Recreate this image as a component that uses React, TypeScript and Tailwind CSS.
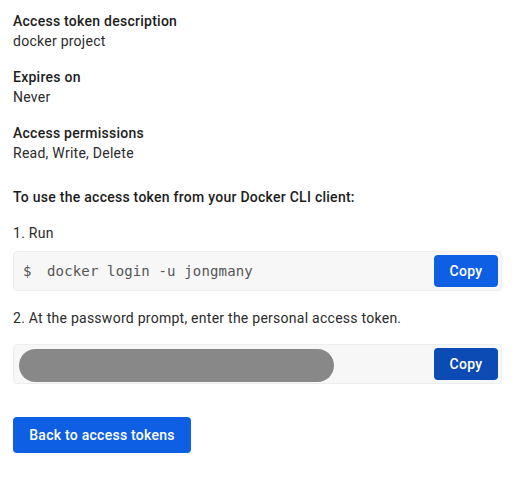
import React from "react";

export default function App() {
  return (
    <div
      className="w-[520px] h-[477px] bg-white pl-[13px] pr-[18px] pt-[11px] text-[14px] leading-[20px] tracking-[0.26px] text-[#1d1d1d]"
      style={{ fontFamily: "Roboto, 'Noto Sans', sans-serif" }}
    >
      <div className="flex flex-col gap-4">
        <div>
          <div className="font-medium">Access token description</div>
          <div className="text-[#2b2b2b]">docker project</div>
        </div>
        <div>
          <div className="font-medium">Expires on</div>
          <div className="text-[#2b2b2b]">Never</div>
        </div>
        <div>
          <div className="font-medium">Access permissions</div>
          <div className="text-[#2b2b2b]">Read, Write, Delete</div>
        </div>
      </div>

      <div className="mt-6 font-medium">To use the access token from your Docker CLI client:</div>

      <div className="mt-4 text-[#2b2b2b]">1. Run</div>
      <div className="mt-2 h-[40px] rounded-[4px] border border-[#eeeeee] bg-[#f7f7f7] flex items-center justify-between pl-[9px] pr-[3px]">
        <div
          className="flex text-[14px] text-[#555555] tracking-[0.15px] whitespace-pre"
          style={{ fontFamily: "'DejaVu Sans Mono', 'Liberation Mono', monospace" }}
        >
          <span className="w-[24px]">$</span>
          <span>docker login -u jongmany</span>
        </div>
        <button className="h-[32px] w-[64px] rounded-[4px] bg-[#0e5fe3] text-white font-medium text-[14px]">
          Copy
        </button>
      </div>

      <div className="mt-[17px] text-[#2b2b2b]">2. At the password prompt, enter the personal access token.</div>
      <div className="mt-4 h-[40px] rounded-[4px] border border-[#eeeeee] bg-[#f7f7f7] flex items-start justify-between pl-[5px] pr-[3px]">
        <div className="mt-[4px] h-[33px] w-[315px] rounded-full bg-[#888888]" />
        <button className="mt-[3px] h-[32px] w-[64px] rounded-[4px] bg-[#0c4bb3] text-white font-medium text-[14px]">
          Copy
        </button>
      </div>

      <button className="mt-[33px] h-[36px] w-[178px] rounded-[4px] bg-[#0e5fe3] text-white font-medium text-[14px]">
        Back to access tokens
      </button>
    </div>
  );
}
